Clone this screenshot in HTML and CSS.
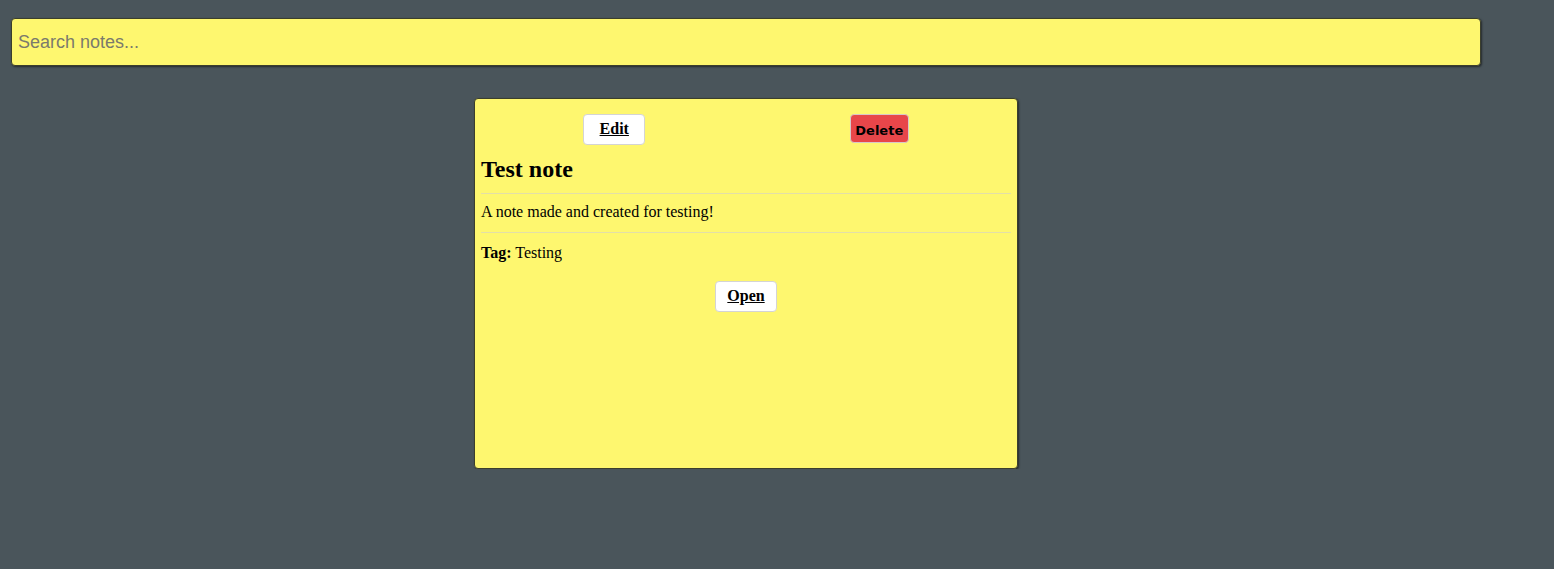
FILE: index.html
```html
<!DOCTYPE html>
<html>
<head>
<meta charset="utf-8">
<link rel="stylesheet" href="styles.css">
</head>
<body>
<div class="page">
  <input class="search" type="text" placeholder="Search notes...">
  <div class="notes">
    <div class="card">
      <div class="actions">
        <button class="btn edit">Edit</button>
        <button class="btn delete">Delete</button>
      </div>
      <h2 class="title">Test note</h2>
      <hr class="rule">
      <p class="desc">A note made and created for testing!</p>
      <hr class="rule rule2">
      <p class="tag"><b>Tag:</b> Testing</p>
      <div class="open-row"><button class="btn open">Open</button></div>
    </div>
  </div>
</div>
</body>
</html>
```
FILE: styles.css
```css
html, body {
  margin: 0;
  padding: 0;
  background: #4a555b;
  font-family: "Liberation Serif", "Times New Roman", serif;
}
.page {
  width: 1470px;
  padding: 18px 0 0 11px;
}
.search {
  display: block;
  box-sizing: border-box;
  width: 1470px;
  height: 48px;
  margin: 0;
  padding: 0 6px;
  background: #fef76f;
  border: 1px solid #3c3f2c;
  border-radius: 4px;
  box-shadow: 1px 1px 2px rgba(0,0,0,0.5);
  font-family: "Liberation Sans", Arial, sans-serif;
  font-size: 18px;
  color: #333;
  outline: none;
}
.search::placeholder {
  color: #7a7a6c;
}
.notes {
  display: flex;
  justify-content: center;
  padding-top: 32px;
}
.card {
  box-sizing: border-box;
  width: 544px;
  height: 371px;
  background: #fef76f;
  border: 1px solid #3c3f2c;
  border-radius: 4px;
  box-shadow: 1px 1px 2px rgba(0,0,0,0.5);
  padding: 15px 6px 6px 6px;
  color: #000;
}
.actions {
  display: flex;
  justify-content: space-around;
  align-items: flex-start;
}
.btn {
  cursor: pointer;
  border-radius: 4px;
  font-weight: bold;
}
.edit, .open {
  background: #fff;
  border: 1px solid #d4d4d4;
  font-family: "Liberation Serif", "Times New Roman", serif;
  font-size: 16px;
  text-decoration: underline;
  width: 62px;
  height: 31px;
  padding: 0 0 2px 0;
  color: #000;
}
.delete {
  background: #e8464a;
  border: 1px solid #d8c8c8;
  font-family: "DejaVu Sans", Verdana, sans-serif;
  font-size: 13px;
  width: 59px;
  height: 29px;
  padding: 3px 0 0 0;
  color: #000;
}
.title {
  margin: 10px 0 0 0;
  font-size: 24px;
  line-height: 28px;
  font-weight: bold;
}
.rule {
  border: 0;
  border-top: 1px solid #e3dfa8;
  margin: 10px 0 0 0;
}
.rule2 {
  margin-top: 11px;
}
.desc {
  margin: 9px 0 0 0;
  font-size: 16px;
  line-height: 18px;
}
.tag {
  margin: 11px 0 0 0;
  font-size: 16px;
  line-height: 18px;
}
.open-row {
  display: flex;
  justify-content: center;
  margin-top: 19px;
}
```
